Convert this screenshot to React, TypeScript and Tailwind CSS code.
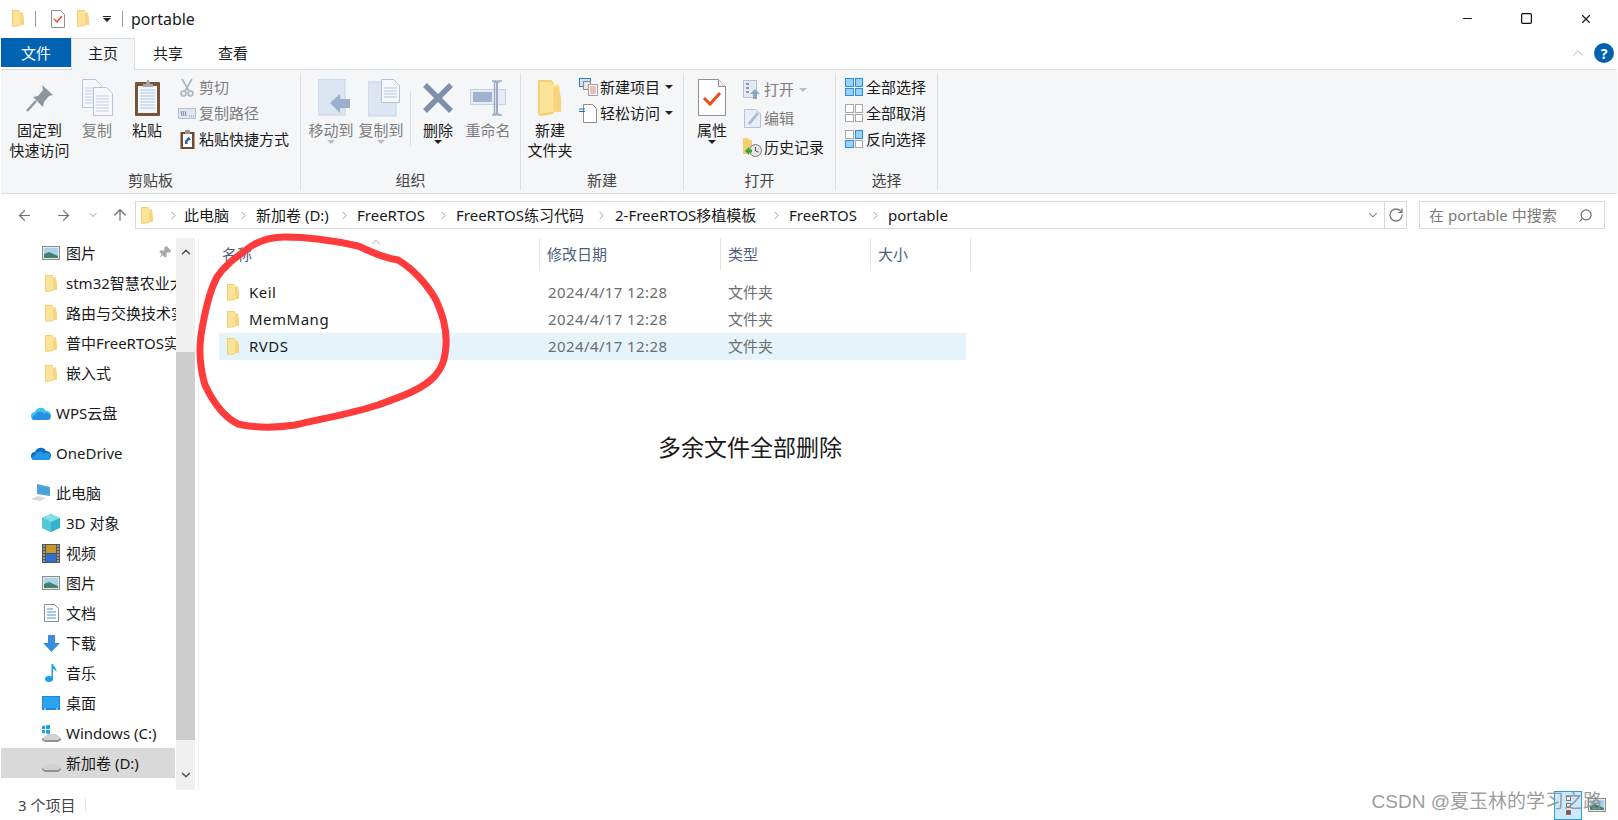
import type { ReactNode } from "react";
import { ChevronDown, ChevronRight, ChevronUp, ArrowLeft, ArrowRight, ArrowUp, RotateCw, Search, Minus, Square, X, Pin } from "lucide-react";

function Folder({ className = "w-[13px] h-[17px]" }: { className?: string }) {
  return (
    <svg viewBox="0 0 13 17" className={className} preserveAspectRatio="none">
      <path d="M0 0h7l1 1v15l-7 1-1-1z" fill="#f3cf73" />
      <path d="M6 2h5l1 8v5H2l4-1z" fill="#fde69a" />
      <path d="M1 1h6v14l-6 1z" fill="#fbe39a" />
      <path d="M8 3h2.5L12 9v6H8z" fill="#f6d57e" />
    </svg>
  );
}

function Arrow({ dim = false }: { dim?: boolean }) {
  return <span className={`inline-block w-0 h-0 border-x-[4px] border-x-transparent border-t-[4px] ${dim ? "border-t-[#b9bdc4]" : "border-t-[#222]"}`} />;
}

function LargeButton({ icon, lines, width, dim = false, arrow }: { icon: ReactNode; lines: string[]; width: number; dim?: boolean; arrow?: "dark" | "dim" }) {
  return (
    <div className={`flex flex-col items-center shrink-0 ${dim ? "text-[#7d7d7d]" : "text-[#1a1a1a]"}`} style={{ width }}>
      <div className="h-[47px] flex items-center justify-center">{icon}</div>
      <div className="-mt-[1px] leading-[20px] text-center whitespace-nowrap">
        {lines.map((l) => (
          <div key={l}>{l}</div>
        ))}
      </div>
      {arrow && (
        <div className="h-[5px] flex">
          <Arrow dim={arrow === "dim"} />
        </div>
      )}
    </div>
  );
}

function SmallButton({ icon, label, dim = false, arrow, h = 26 }: { icon: ReactNode; label: string; dim?: boolean; arrow?: "dark" | "dim"; h?: number }) {
  return (
    <div className={`flex items-center whitespace-nowrap ${dim ? "text-[#7d7d7d]" : "text-[#1a1a1a]"}`} style={{ height: h }}>
      <div className="w-[20px] flex justify-center mr-[2px]">{icon}</div>
      <span>{label}</span>
      {arrow && (
        <span className="ml-[5px] flex">
          <Arrow dim={arrow === "dim"} />
        </span>
      )}
    </div>
  );
}

function Group({ label, width, children }: { label: string; width: number; children: ReactNode }) {
  return (
    <div className="flex flex-col shrink-0 h-[117px] border-r border-[#dcdee1]" style={{ width }}>
      <div className="flex-1 flex">{children}</div>
      <div className="h-[22px] text-center leading-[24px] text-[#444]">{label}</div>
    </div>
  );
}

const PinIcon = () => (
  <svg width="28" height="28" viewBox="0 0 28 28">
    <path d="M16 1l11 10-4 1-5 6-1 5-10-10 5-1 5-6z" fill="#8d969d" />
    <path d="M10 17L1 27" stroke="#8d969d" strokeWidth="2.5" />
  </svg>
);

const DocIcon = ({ x = 0 }: { x?: number }) => (
  <g transform={`translate(${x} 0)`}>
    <path d="M.5.5h13l6 6v22H.5z" fill="#f6f8fb" stroke="#b8c5d9" />
    <path d="M3 9h13M3 12h13M3 15h13M3 18h13M3 21h13M3 24h13" stroke="#c3d0e3" />
  </g>
);

const CopyIcon = () => (
  <svg width="31" height="37" viewBox="0 0 31 37">
    <DocIcon />
    <g transform="translate(11 8)">
      <DocIcon />
    </g>
  </svg>
);

const PasteIcon = () => (
  <svg width="27" height="38" viewBox="0 0 27 38">
    <rect x="1" y="3" width="25" height="34" rx="1" fill="#7a5236" />
    <rect x="4" y="7" width="19" height="27" fill="#f3f6fb" />
    <path d="M6 11h15M6 14h15M6 17h15M6 20h15M6 23h15M6 26h15M6 29h15" stroke="#a9c8e8" />
    <path d="M9 5h3l1-4h2l1 4h3v3H9z" fill="#a5a9ad" />
  </svg>
);

const ScissorsIcon = () => (
  <svg width="14" height="19" viewBox="0 0 14 19" fill="none" stroke="#a9b4c4" strokeWidth="1.6">
    <path d="M2 1l7 12M12 1L5 13" />
    <circle cx="3.5" cy="15.5" r="2.5" />
    <circle cx="10.5" cy="15.5" r="2.5" />
  </svg>
);

const PathIcon = () => (
  <svg width="18" height="11" viewBox="0 0 18 11">
    <rect x=".5" y=".5" width="17" height="10" fill="#dfe6f2" stroke="#b3bfd3" />
    <path d="M3 3l1 5M5 3l1 5M7 3l1 5" stroke="#7d8ca3" />
    <path d="M11 8h1M13 8h1M15 8h1" stroke="#7d8ca3" />
  </svg>
);

const ShortcutIcon = () => (
  <svg width="15" height="19" viewBox="0 0 15 19">
    <rect x=".5" y="2" width="14" height="17" fill="#6e4a2e" />
    <rect x="3" y="4" width="9" height="13" fill="#fff" />
    <rect x="5" y="0" width="5" height="4" fill="#8f959b" />
    <path d="M5 14v-3l2-2H6l3-2 2 3H9.5L7.5 11.5V14z" fill="#2a62a8" />
  </svg>
);

const MoveIcon = () => (
  <svg width="33" height="37" viewBox="0 0 33 37" className="ml-[7px]">
    <rect x="0" y="0" width="27" height="36" fill="#dce5f2" stroke="#c6d2e4" />
    <path d="M12 24l10-9v5h10v9H22v5z" fill="#9cb0cd" />
  </svg>
);

const CopyToIcon = () => (
  <svg width="33" height="38" viewBox="0 0 33 38" className="ml-[7px]">
    <rect x="0" y="3" width="28" height="34" fill="#dce5f2" stroke="#c6d2e4" />
    <path d="M13.500.5h12l6 6v17h-18z" fill="#f6f8fb" stroke="#b3c0d6" />
    <path d="M16 9h13M16 12h13M16 15h13M16 18h13" stroke="#b8c5d9" />
  </svg>
);

const DeleteIcon = () => (
  <svg width="32" height="32" viewBox="0 0 32 32">
    <path d="M3 3l26 26M29 3L3 29" stroke="#7f8fad" strokeWidth="5.500" />
  </svg>
);

const RenameIcon = () => (
  <svg width="36" height="36" viewBox="0 0 36 36">
    <rect x=".5" y="9.500" width="35" height="15" fill="#e6ecf5" stroke="#c5d0e1" />
    <rect x="3" y="12" width="19" height="10" fill="#a0b2ce" />
    <path d="M22 1h4v1h-1.500v32H26v1h-4M32 1h-4v1h1.500M32 35h-4v-1h1.500" fill="none" stroke="#9cabc4" strokeWidth="1.500" />
    <path d="M27 2v32" stroke="#9cabc4" strokeWidth="2" />
  </svg>
);

const NewItemIcon = () => (
  <svg width="19" height="18" viewBox="0 0 19 18">
    <rect x=".5" y=".5" width="11" height="8" fill="#cfe3f7" stroke="#2d7ec0" />
    <rect x="4.500" y="3.500" width="7" height="8" fill="#e6e6e6" stroke="#8c8c8c" />
    <rect x="9.500" y="6.500" width="9" height="11" fill="#fff" stroke="#a0a0a0" />
    <path d="M11 9h6M11 11h6M11 13h6M11 15h6" stroke="#d77f74" />
  </svg>
);

const EasyAccessIcon = () => (
  <svg width="18" height="19" viewBox="0 0 18 19">
    <path d="M4.500.5h9l4 4v14h-13z" fill="#fff" stroke="#8f8f8f" />
    <path d="M0 5h6M0 7.500h6" stroke="#2370b5" strokeWidth="1.200" />
  </svg>
);

const PropIcon = () => (
  <svg width="28" height="37" viewBox="0 0 28 37">
    <path d="M.5.5h20l7 7v29H.5z" fill="#fff" stroke="#8f8f8f" />
    <path d="M20.500.5v7h7" fill="#f1f1f1" stroke="#8f8f8f" />
    <path d="M6 19l6 6 10-11" fill="none" stroke="#e8501a" strokeWidth="3" />
  </svg>
);

const OpenIcon = () => (
  <svg width="18" height="19" viewBox="0 0 18 19">
    <rect x=".5" y=".5" width="13" height="17" fill="#e3eaf4" stroke="#b5c2d6" />
    <path d="M3 4h3M3 8h3M3 12h3" stroke="#8a9bb5" strokeWidth="2" />
    <path d="M12 9l5 5h-3v5h-4v-5H7z" fill="#8ea5c4" />
  </svg>
);

const EditIcon = () => (
  <svg width="17" height="19" viewBox="0 0 17 19">
    <path d="M.5.5h11l5 4v14H.5z" fill="#eaeff6" stroke="#b5c2d6" />
    <path d="M4 14L13 3l2 2-9 11z" fill="#a9bbd4" />
  </svg>
);

const HistoryIcon = () => (
  <svg width="19" height="19" viewBox="0 0 19 19">
    <path d="M0 0h5l1 2h3v14H0z" fill="#f3cf73" />
    <circle cx="12.500" cy="12.500" r="6" fill="#e5e5e5" stroke="#7c7c7c" />
    <path d="M12.500 9v4l3 1" fill="none" stroke="#555" />
    <path d="M2 13l4-4v2.500h3v3H6V17z" fill="#3aa535" />
  </svg>
);

function GridIcon({ on }: { on: boolean[] }) {
  return (
    <div className="grid grid-cols-2 gap-[1px] w-[18px] h-[18px]">
      {on.map((v, i) => (
        <span key={i} className={v ? "bg-[#9cd0f5] border border-[#2b8fe0]" : "bg-white border border-[#a8a8a8]"} />
      ))}
    </div>
  );
}

function Ribbon() {
  return (
    <div className="h-[125px] mx-[1px] bg-[#f5f6f7] border-y border-[#dadbdc] flex pt-[3px] text-[15px]">
      <Group label="剪贴板" width={300}>
        <div className="flex pt-px">
          <LargeButton icon={<PinIcon />} lines={["固定到", "快速访问"]} width={77} />
          <LargeButton dim icon={<CopyIcon />} lines={["复制"]} width={38} />
          <LargeButton icon={<PasteIcon />} lines={["粘贴"]} width={62} />
          <div className="flex flex-col -ml-[1px]">
            <SmallButton dim icon={<ScissorsIcon />} label="剪切" />
            <SmallButton dim icon={<PathIcon />} label="复制路径" />
            <SmallButton icon={<ShortcutIcon />} label="粘贴快捷方式" />
          </div>
        </div>
      </Group>
      <Group label="组织" width={220}>
        <div className="flex pt-px pl-[5px]">
          <LargeButton dim icon={<MoveIcon />} lines={["移动到"]} width={50} arrow="dim" />
          <LargeButton dim icon={<CopyToIcon />} lines={["复制到"]} width={50} arrow="dim" />
          <div className="w-px h-[55px] bg-[#dcdee1] mt-[17px] ml-[4px] mr-[3px]" />
          <LargeButton icon={<DeleteIcon />} lines={["删除"]} width={48} arrow="dark" />
          <LargeButton dim icon={<RenameIcon />} lines={["重命名"]} width={52} />
        </div>
      </Group>
      <Group label="新建" width={163}>
        <div className="flex pt-px pl-[4px]">
          <LargeButton icon={<Folder className="w-[25px] h-[36px]" />} lines={["新建", "文件夹"]} width={50} />
          <div className="flex flex-col ml-[3px]">
            <SmallButton icon={<NewItemIcon />} label="新建项目" arrow="dark" />
            <SmallButton icon={<EasyAccessIcon />} label="轻松访问" arrow="dark" />
          </div>
        </div>
      </Group>
      <Group label="打开" width={152}>
        <div className="flex pt-px pl-[5px]">
          <LargeButton icon={<PropIcon />} lines={["属性"]} width={46} arrow="dark" />
          <div className="flex flex-col ml-[7px] pt-px">
            <SmallButton dim icon={<OpenIcon />} label="打开" arrow="dim" h={29} />
            <SmallButton dim icon={<EditIcon />} label="编辑" h={29} />
            <SmallButton icon={<HistoryIcon />} label="历史记录" h={29} />
          </div>
        </div>
      </Group>
      <Group label="选择" width={102}>
        <div className="flex flex-col mt-[1px] pl-[8px]">
          <SmallButton icon={<GridIcon on={[true, true, true, true]} />} label="全部选择" />
          <SmallButton icon={<GridIcon on={[false, false, false, false]} />} label="全部取消" />
          <SmallButton icon={<GridIcon on={[false, true, true, false]} />} label="反向选择" />
        </div>
      </Group>
    </div>
  );
}

function TitleBar() {
  return (
    <div className="h-[37px] flex items-center pl-[12px] text-[15px] text-[#1a1a1a]">
      <Folder />
      <div className="w-px h-[16px] bg-[#9a9a9a] ml-[10px] mr-[15px]" />
      <svg width="14" height="18" viewBox="0 0 14 18">
        <path d="M.5.5h9l4 4v13H.5z" fill="#fff" stroke="#8f8f8f" />
        <path d="M3 9l3 3 5-6" fill="none" stroke="#e8501a" strokeWidth="1.500" />
      </svg>
      <span className="w-[12px]" />
      <Folder />
      <div className="ml-[13px] flex flex-col items-center gap-[1px]">
        <span className="w-[8px] h-px bg-[#222]" />
        <Arrow />
      </div>
      <div className="w-px h-[16px] bg-[#9a9a9a] ml-[11px] mr-[8px]" />
      <span className="text-[16px]">portable</span>
      <div className="ml-auto flex items-center pr-[25px] gap-[46px]">
        <Minus size={13} strokeWidth={1.2} absoluteStrokeWidth color="#111" />
        <Square size={13} strokeWidth={1.2} absoluteStrokeWidth color="#111" />
        <X size={14} strokeWidth={1.1} absoluteStrokeWidth color="#111" />
      </div>
    </div>
  );
}

function Tabs() {
  return (
    <div className="h-[33px] flex items-end text-[15px] text-[#1a1a1a] relative z-10 -mb-px">
      <div className="ml-[1px] w-[70px] h-[29px] mb-[3px] pt-px bg-[#0063b1] text-white flex items-center justify-center">文件</div>
      <div className="w-[64px] h-[32px] bg-[#f5f6f7] border-x border-t border-[#dadbdc] flex items-start pt-[3px] justify-center">主页</div>
      <div className="w-[66px] h-[29px] mb-[3px] pt-px flex items-center justify-center">共享</div>
      <div className="w-[64px] h-[29px] mb-[3px] pt-px flex items-center justify-center">查看</div>
      <div className="ml-auto mr-[4px] mb-[7px] flex items-center gap-[7px]">
        <ChevronUp size={18} strokeWidth={1} color="#a5a5a5" />
        <div className="w-[20px] h-[20px] rounded-full bg-[#0063b1] text-white text-[14px] font-bold flex items-center justify-center">?</div>
      </div>
    </div>
  );
}

function Crumb({ label, width }: { label: string; width: number }) {
  return (
    <div className="flex items-center shrink-0 whitespace-nowrap" style={{ width }}>
      <span>{label}</span>
    </div>
  );
}

function Sep({ width = 28 }: { width?: number }) {
  return (
    <div className="flex justify-center shrink-0" style={{ width }}>
      <ChevronRight size={13} strokeWidth={1.6} color="#8c8c8c" />
    </div>
  );
}

function AddressBar() {
  return (
    <div className="h-[44px] flex items-start pt-[7px] text-[15px] text-[#1a1a1a]">
      <div className="w-[135px] h-[28px] flex items-center pl-[16px] shrink-0">
        <ArrowLeft size={17} strokeWidth={1.6} color="#6e6e6e" />
        <ArrowRight size={17} strokeWidth={1.6} color="#6e6e6e" className="ml-[22px]" />
        <ChevronDown size={12} strokeWidth={1.8} color="#8c8c8c" className="ml-[15px]" />
        <ArrowUp size={18} strokeWidth={1.6} color="#6e6e6e" className="ml-[12px]" />
      </div>
      <div className="w-[1272px] h-[28px] border border-[#d9d9d9] flex items-center shrink-0">
        <span className="ml-[5px] mr-[8px] flex">
          <Folder />
        </span>
        <Sep width={22} />
        <Crumb label="此电脑" width={47} />
        <Sep width={25} />
        <Crumb label="新加卷 (D:)" width={75} />
        <Sep width={26} />
        <Crumb label="FreeRTOS" width={73} />
        <Sep width={26} />
        <Crumb label="FreeRTOS练习代码" width={131} />
        <Sep width={28} />
        <Crumb label="2-FreeRTOS移植模板" width={149} />
        <Sep width={25} />
        <Crumb label="FreeRTOS" width={74} />
        <Sep width={25} />
        <Crumb label="portable" width={64} />
        <ChevronDown size={14} strokeWidth={1.8} color="#6e6e6e" className="ml-auto mr-[4px]" />
        <div className="w-[22px] h-full border-l border-[#d9d9d9] flex items-center justify-center">
          <RotateCw size={16} strokeWidth={2} color="#7a7a7a" />
        </div>
      </div>
      <div className="ml-[12px] w-[186px] h-[28px] border border-[#d9d9d9] flex items-center pl-[9px] pr-[11px] text-[#7a7a7a] shrink-0">
        <span>在 portable 中搜索</span>
        <Search size={15} strokeWidth={2} color="#6e6e6e" className="ml-auto -scale-x-100" />
      </div>
    </div>
  );
}

const PicturesIcon = () => (
  <svg width="18" height="14" viewBox="0 0 18 14">
    <rect x=".5" y=".5" width="17" height="13" fill="#e8e8e8" stroke="#8d8d8d" />
    <rect x="2" y="2" width="14" height="10" fill="#a9d3ea" />
    <path d="M2 8l5-2 9 4v2H2z" fill="#45806f" />
  </svg>
);

const Cloud = ({ c1, c2 }: { c1: string; c2: string }) => (
  <svg width="20" height="15" viewBox="0 0 20 15">
    <path d="M4 14a4 4 0 0 1 0-8 6 6 0 0 1 11-1 4.500 4.500 0 0 1 1 9z" fill={c1} />
    <path d="M2 14a3 3 0 0 1 2-5 5 5 0 0 1 9-1 3.500 3.500 0 0 1 5 6z" fill={c2} />
  </svg>
);

const PcIcon = () => (
  <svg width="20" height="18" viewBox="0 0 20 18">
    <path d="M6 0l13 3v9l-13-2z" fill="#4ba3d9" />
    <path d="M0 15l7-3 8 2-6 3z" fill="#d6d9dc" />
  </svg>
);

const CubeIcon = () => (
  <svg width="18" height="18" viewBox="0 0 18 18">
    <path d="M9 0l9 4v10l-9 4-9-4V4z" fill="#2fb4c8" />
    <path d="M9 0l9 4-9 4-9-4z" fill="#7fe0ea" />
    <path d="M9 8v10l-9-4V4z" fill="#52c8d8" />
  </svg>
);

const VideoIcon = () => (
  <svg width="18" height="19" viewBox="0 0 18 19">
    <rect width="18" height="19" fill="#555" />
    <rect x="4" y="1" width="10" height="8" fill="#c49a2b" />
    <rect x="4" y="10" width="10" height="8" fill="#2f6fd0" />
    <path d="M1 2h2M1 5h2M1 8h2M1 11h2M1 14h2M1 17h2M15 2h2M15 5h2M15 8h2M15 11h2M15 14h2M15 17h2" stroke="#ddd" />
  </svg>
);

const DocsIcon = () => (
  <svg width="15" height="18" viewBox="0 0 15 18">
    <path d="M.5.500h10l4 4v13H.5z" fill="#fff" stroke="#8d8d8d" />
    <path d="M3 5h6M3 8h9M3 11h9M3 14h9" stroke="#4a90c8" />
  </svg>
);

const DownloadIcon = () => (
  <svg width="17" height="17" viewBox="0 0 17 17">
    <path d="M5 0h7v8h5l-8.500 9L0 8h5z" fill="#3a8ddc" />
  </svg>
);

const MusicIcon = () => (
  <svg width="12" height="18" viewBox="0 0 12 18">
    <ellipse cx="4" cy="15" rx="4" ry="3" fill="#16a1e8" />
    <path d="M6.500 15V0h1.500c.5 3 4 4 3.500 8-1-2-2.500-3-3.500-3v10z" fill="#16a1e8" />
  </svg>
);

const DesktopIcon = () => (
  <svg width="18" height="14" viewBox="0 0 18 14">
    <rect width="18" height="14" fill="#1b87d8" />
    <rect x="1" y="1" width="16" height="11" fill="#2ba3ee" />
    <path d="M2 13h2M14 13h2" stroke="#fff" />
  </svg>
);

const DriveIcon = ({ win = false }: { win?: boolean }) => (
  <svg width="19" height="17" viewBox="0 0 19 17">
    {win && <path d="M0 1l3-.5V4H0zM4 .3L8 0v4H4zM0 5h3v3.500L0 8zM4 5h4v4l-4-.5z" fill="#19a3ea" />}
    <path d="M0 13l6-4h8l5 4v2l-5 2H3l-3-2z" fill="#cfd2d4" />
    <path d="M0 13l3 2h13l3-2v2l-3 2H3l-3-2z" fill="#8e9296" />
  </svg>
);

type NavItem = { label: string; icon: ReactNode; indent?: number; gap?: number; selected?: boolean; pin?: boolean };

const navItems: NavItem[] = [
  { label: "图片", icon: <PicturesIcon />, pin: true },
  { label: "stm32智慧农业大棚", icon: <Folder /> },
  { label: "路由与交换技术实验", icon: <Folder /> },
  { label: "普中FreeRTOS实验", icon: <Folder /> },
  { label: "嵌入式", icon: <Folder /> },
  { label: "WPS云盘", icon: <Cloud c1="#38c6e8" c2="#2a8fe0" />, indent: 31, gap: 10 },
  { label: "OneDrive", icon: <Cloud c1="#0f6fc6" c2="#2596e6" />, indent: 31, gap: 10 },
  { label: "此电脑", icon: <PcIcon />, indent: 31, gap: 10 },
  { label: "3D 对象", icon: <CubeIcon /> },
  { label: "视频", icon: <VideoIcon /> },
  { label: "图片", icon: <PicturesIcon /> },
  { label: "文档", icon: <DocsIcon /> },
  { label: "下载", icon: <DownloadIcon /> },
  { label: "音乐", icon: <MusicIcon /> },
  { label: "桌面", icon: <DesktopIcon /> },
  { label: "Windows (C:)", icon: <DriveIcon win /> },
  { label: "新加卷 (D:)", icon: <DriveIcon />, selected: true },
];

function Sidebar() {
  return (
    <div className="w-[176px] shrink-0 overflow-hidden">
      {navItems.map((n, i) => {
        const indent = n.indent ?? 41;
        return (
          <div
            key={i}
            className={`relative h-[30px] flex items-center whitespace-nowrap text-[15px] text-[#1a1a1a] ${n.selected ? "bg-[#d9d9d9] ml-[1px] w-[174px]" : ""}`}
            style={{ paddingLeft: n.selected ? indent - 1 : indent, marginTop: n.gap ?? 0 }}
          >
            <div className="w-[20px] flex justify-center shrink-0">{n.icon}</div>
            <span className="ml-[5px]">{n.label}</span>
            {n.pin && <Pin size={13} color="#a8a8a8" fill="#a8a8a8" className="absolute left-[158px] top-[8px] rotate-45" />}
          </div>
        );
      })}
    </div>
  );
}

function Scrollbar() {
  return (
    <div className="w-[19px] shrink-0 bg-[#f0f0f0] flex flex-col">
      <div className="h-[28px] flex items-center justify-center">
        <ChevronUp size={14} strokeWidth={2.6} color="#555" />
      </div>
      <div className="h-[86px]" />
      <div className="h-[388px] bg-[#cdcdcd]" />
      <div className="flex-1 flex items-end justify-center pb-[8px]">
        <ChevronDown size={14} strokeWidth={2.6} color="#555" />
      </div>
    </div>
  );
}

const columns = [
  { label: "名称", width: 325 },
  { label: "修改日期", width: 181 },
  { label: "类型", width: 150 },
  { label: "大小", width: 100 },
];

const files = [
  { name: "Keil", selected: false },
  { name: "MemMang", selected: false },
  { name: "RVDS", selected: true },
];

function FileList() {
  return (
    <div className="flex-1 ml-[3px] border-l border-[#f0f0f0]">
      <div className="relative h-[32px] ml-[16px] flex text-[15px] text-[#4c607a]">
        {columns.map((c) => (
          <div key={c.label} className="h-full border-r border-[#e5e5e5] pl-[7px] pt-[5px] shrink-0" style={{ width: c.width }}>
            {c.label}
          </div>
        ))}
        <ChevronUp size={14} strokeWidth={1} color="#777" className="absolute left-[154px] -top-[3px]" />
      </div>
      <div className="mt-[9px] ml-[20px] w-[747px] text-[15px]">
        {files.map((f) => (
          <div key={f.name} className={`h-[27px] flex items-center ${f.selected ? "bg-[#e5f3fb]" : ""}`}>
            <div className="w-[30px] pl-[8px] flex shrink-0">
              <Folder />
            </div>
            <div className="w-[299px] text-[#1a1a1a] tracking-[0.5px]">{f.name}</div>
            <div className="w-[180px] text-[#6d6d6d] tracking-[0.4px]">2024/4/17 12:28</div>
            <div className="text-[#6d6d6d]">文件夹</div>
          </div>
        ))}
      </div>
      <div className="mt-[71px] ml-[459px] text-[23px] leading-[32px] text-[#1a1a1a]">多余文件全部删除</div>
    </div>
  );
}

function StatusBar() {
  return (
    <div className="h-[30px] flex items-center pl-[18px] text-[15px] text-[#444]">
      <span>3 个项目</span>
      <div className="w-px h-[14px] bg-[#e5e5e5] ml-[10px]" />
      <div className="ml-auto mr-[12px] flex items-center">
        <div className="w-[28px] h-[29px] border border-[#26a0da] bg-[#cce8ff] flex flex-col items-center justify-center gap-[2px]">
          <span className="w-[5px] h-[5px] bg-white border border-[#777]" />
          <span className="w-[5px] h-[5px] bg-white border border-[#777]" />
          <span className="w-[5px] h-[5px] bg-[#c0392b] border border-[#777]" />
        </div>
        <span className="ml-[6px] flex">
          <PicturesIcon />
        </span>
      </div>
    </div>
  );
}

export default function App() {
  return (
    <div
      className="relative w-[1618px] h-[820px] overflow-hidden bg-white"
      style={{ fontFamily: '"Noto Sans", "Noto Sans CJK SC", sans-serif' }}
    >
      <TitleBar />
      <Tabs />
      <Ribbon />
      <AddressBar />
      <div className="flex h-[552px]">
        <Sidebar />
        <Scrollbar />
        <FileList />
      </div>
      <StatusBar />

      {/* 手绘红圈 */}
      <svg className="absolute inset-0 pointer-events-none" width="1618" height="820" viewBox="0 0 1618 820" fill="none">
        <path
          d="M246 250C258 240 270 237 285 237C310 237 340 242 358 246C372 252 382 258 398 260C412 268 427 284 436 300C443 315 447 330 446 345C445 360 442 368 435 376C422 390 400 397 378 405C350 414 325 418 295 425C275 428 255 428 238 424C222 416 212 400 205 385C200 368 199 350 201 335C205 310 210 290 217 277C225 265 235 258 246 250"
          stroke="#ff3b3b"
          strokeWidth="7"
          strokeLinecap="round"
        />
      </svg>

      {/* 水印 */}
      <div className="absolute right-[16px] bottom-[7px] text-[19px] leading-[22px] text-[#8f8f8f]/90 whitespace-nowrap" style={{ fontFamily: '"Liberation Sans", "Noto Sans CJK SC", sans-serif' }}>
        CSDN @夏玉林的学习之路
      </div>
    </div>
  );
}
